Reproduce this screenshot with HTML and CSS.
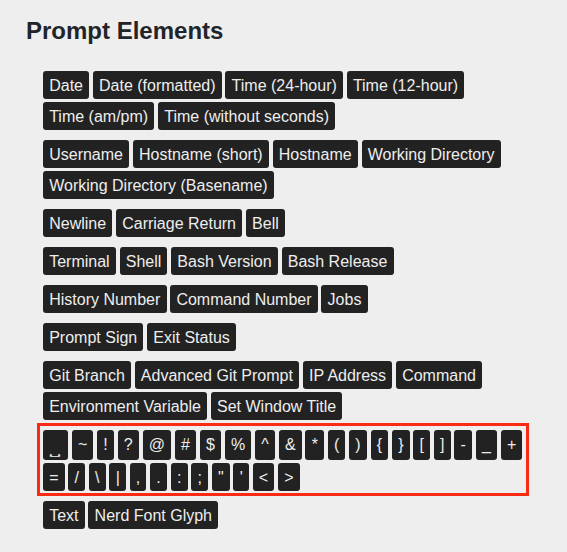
FILE: index.html
```html
<!DOCTYPE html>
<html lang="en">
<head>
<meta charset="utf-8">
<title>Prompt Elements</title>
<link rel="stylesheet" href="styles.css">
</head>
<body>
<main class="panel">
  <h2 class="title">Prompt Elements</h2>
  <div class="groups">
    <div class="group">
      <span class="chip">Date</span><span class="chip">Date (formatted)</span><span class="chip">Time (24-hour)</span><span class="chip">Time (12-hour)</span><span class="chip">Time (am/pm)</span><span class="chip">Time (without seconds)</span>
    </div>
    <div class="group">
      <span class="chip">Username</span><span class="chip">Hostname (short)</span><span class="chip">Hostname</span><span class="chip">Working Directory</span><span class="chip">Working Directory (Basename)</span>
    </div>
    <div class="group">
      <span class="chip">Newline</span><span class="chip">Carriage Return</span><span class="chip">Bell</span>
    </div>
    <div class="group">
      <span class="chip">Terminal</span><span class="chip">Shell</span><span class="chip">Bash Version</span><span class="chip">Bash Release</span>
    </div>
    <div class="group">
      <span class="chip">History Number</span><span class="chip">Command Number</span><span class="chip">Jobs</span>
    </div>
    <div class="group">
      <span class="chip">Prompt Sign</span><span class="chip">Exit Status</span>
    </div>
    <div class="group">
      <span class="chip">Git Branch</span><span class="chip">Advanced Git Prompt</span><span class="chip">IP Address</span><span class="chip">Command</span><span class="chip">Environment Variable</span><span class="chip">Set Window Title</span>
    </div>
    <div class="group group-highlight">
      <span class="chip"><span class="space-glyph">␣</span></span><span class="chip">~</span><span class="chip">!</span><span class="chip">?</span><span class="chip">@</span><span class="chip">#</span><span class="chip">$</span><span class="chip">%</span><span class="chip">^</span><span class="chip">&amp;</span><span class="chip">*</span><span class="chip">(</span><span class="chip">)</span><span class="chip">{</span><span class="chip">}</span><span class="chip">[</span><span class="chip">]</span><span class="chip">-</span><span class="chip">_</span><span class="chip">+</span><span class="chip">=</span><span class="chip">/</span><span class="chip">\</span><span class="chip">|</span><span class="chip">,</span><span class="chip">.</span><span class="chip">:</span><span class="chip">;</span><span class="chip">"</span><span class="chip">'</span><span class="chip">&lt;</span><span class="chip">&gt;</span>
    </div>
    <div class="group">
      <span class="chip">Text</span><span class="chip">Nerd Font Glyph</span>
    </div>
  </div>
</main>
</body>
</html>
```

FILE: styles.css
```css
html, body {
  margin: 0;
  padding: 0;
  background: #eeeeee;
}

body {
  font-family: "Liberation Sans", Arial, sans-serif;
}

.panel {
  padding: 15px 26px 0 26px;
}

.title {
  margin: 0;
  font-size: 24px;
  line-height: 32px;
  font-weight: 700;
  color: #212529;
}

.groups {
  margin: 24px 0 0 17px;
  width: 480px;
  display: flex;
  flex-direction: column;
  gap: 10px;
}

.group {
  display: flex;
  flex-wrap: wrap;
  column-gap: 3.7px;
  row-gap: 3px;
}

.group-highlight {
  margin: -7px -6px -5px -6px;
  padding: 4px 3px 2px 3px;
  border: 3px solid #fb2b13;
}

.chip {
  display: inline-block;
  background: #222222;
  color: #eeeeee;
  font-size: 16px;
  line-height: 18px;
  padding: 6px 6.2px 4px 6.2px;
  border-radius: 3px;
  white-space: nowrap;
}

.space-glyph {
  display: inline-block;
  font-family: "DejaVu Sans Mono", monospace;
  font-size: 21px;
  line-height: 18px;
  transform: translateY(2px) scale(1.05, 0.35);
  transform-origin: 50% 100%;
}
```
